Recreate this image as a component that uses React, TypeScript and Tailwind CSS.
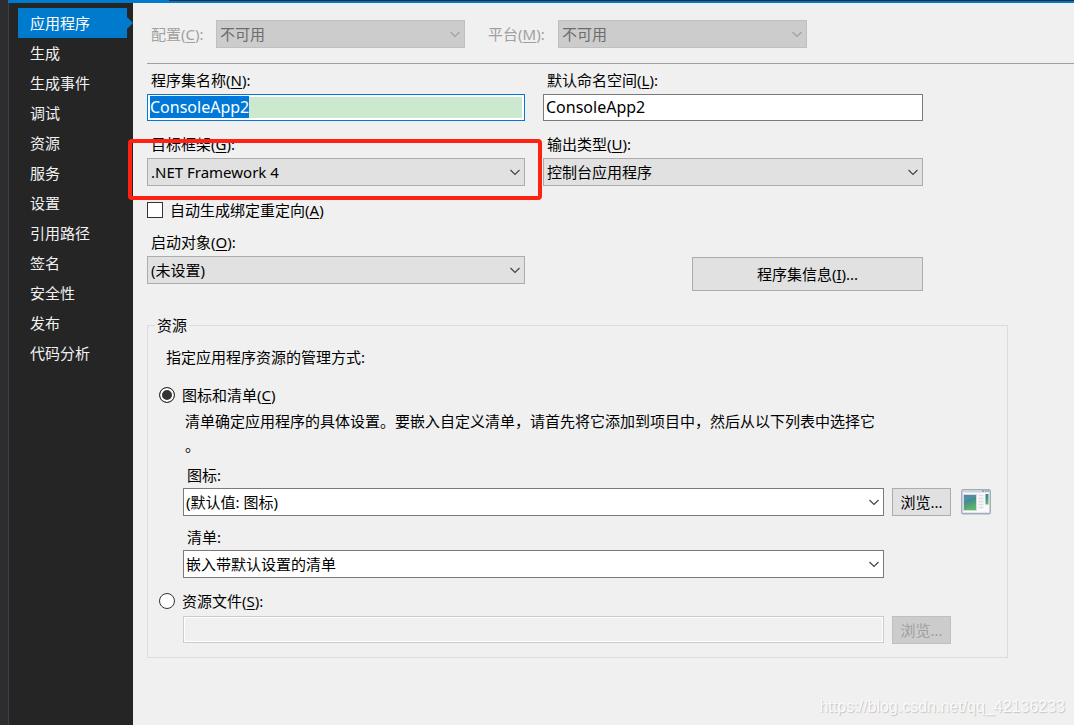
import { useEffect, useRef } from 'react';
import type { ReactNode } from 'react';

interface SelectBoxProps {
    id: string;
    value: string;
    variant?: 'list' | 'edit';
    disabled?: boolean;
}

interface FieldProps {
    id: string;
    label: ReactNode;
    children: ReactNode;
}

const pages = ['应用程序', '生成', '生成事件', '调试', '资源', '服务', '设置', '引用路径', '签名', '安全性', '发布', '代码分析'];

const Key = ({ children }: { children: string }) => (
    <span>(<u className="underline-offset-2">{children}</u>)</span>
);

const SelectBox = ({ id, value, variant = 'list', disabled }: SelectBoxProps) => {
    const look = disabled
        ? 'border-[#bfbfbf] bg-[#cccccc] text-[#6d6d6d] pl-[3px]'
        : variant === 'edit'
          ? 'border-[#7a7a7a] bg-white pl-[2px]'
          : 'border-[#acacac] bg-[#e1e1e1] pl-[3px]';

    return (
        <div className="relative w-full min-w-0">
            <select
                id={id}
                disabled={disabled}
                className={`block h-7 w-full appearance-none border pr-6 opacity-100 outline-none ${look}`}
            >
                <option>{value}</option>
            </select>
            <svg
                className={`pointer-events-none absolute right-[5px] top-[11px] ${disabled ? 'text-[#a0a0a0]' : 'text-[#404040]'}`}
                width="10"
                height="7"
                viewBox="0 0 10 7"
                fill="none"
                stroke="currentColor"
                strokeWidth="1.1"
            >
                <path d="M0.5 1 L5 5.500 L9.500 1" />
            </svg>
        </div>
    );
};

const Field = ({ id, label, children }: FieldProps) => (
    <div className="flex min-w-0 flex-col gap-1">
        <label htmlFor={id} className="pl-1">{label}</label>
        {children}
    </div>
);

const Sidebar = () => (
    <nav className="w-[125px] shrink-0 border-l border-[#3f3f46] bg-[#252526] pl-[9px] pt-[5px] text-[#f1f1f1]">
        {pages.map((page, i) => (
            <a
                key={page}
                href="#"
                className={`relative mr-[6px] block h-[30px] pl-3 leading-[30px] ${i === 0 ? 'bg-[#007acc] text-white' : ''}`}
            >
                {page}
                {i === 0 && (
                    <svg className="absolute left-full top-[9px]" width="6" height="12" viewBox="0 0 6 12">
                        <path d="M0 0 L6 6 L0 12 Z" fill="#007acc" />
                    </svg>
                )}
            </a>
        ))}
    </nav>
);

const WindowIcon = () => (
    <svg className="self-center justify-self-end" width="30" height="26" viewBox="0 0 30 26">
        <defs>
            <linearGradient id="pane" x1="0" y1="0" x2="0.3" y2="1">
                <stop offset="0" stopColor="#4377a8" />
                <stop offset="0.5" stopColor="#45908c" />
                <stop offset="1" stopColor="#5fb56a" />
            </linearGradient>
        </defs>
        <rect x="0.75" y="0.75" width="28.5" height="24" rx="1.5" fill="#f8f9fa" stroke="#a3adb8" strokeWidth="1.5" />
        <rect x="1.5" y="1.5" width="27" height="2" fill="#cbd3dc" />
        <path d="M21 2 h2 M24 2 h1.5 M26.5 2 h1.5" stroke="#6e7c8c" />
        <rect x="2.5" y="5.5" width="13" height="16" fill="#fff" stroke="#d5d9dd" />
        <rect x="3" y="6" width="12" height="15" fill="url(#pane)" />
        <path d="M3 14 Q7 9 15 8 V6 H3 Z" fill="#6ba3c4" opacity="0.35" />
        <path d="M17.5 6.5 h5 M17.5 9.5 h5 M17.5 12.5 h5 M17.5 15.5 h5 M17.5 18.5 h5" stroke="#dcdfe2" strokeWidth="1.5" />
        <rect x="24.500" y="5" width="3" height="10.500" fill="url(#pane)" />
        <path d="M2 23.5 H28" stroke="#e4e7ea" />
    </svg>
);

const radioClass =
    'size-4 shrink-0 appearance-none rounded-full border border-[#333] bg-white checked:bg-[#333] checked:shadow-[inset_0_0_0_2px_#fff]';

const App = () => {
    const nameRef = useRef<HTMLInputElement>(null);

    useEffect(() => {
        nameRef.current?.focus();
        nameRef.current?.select();
    }, []);

    return (
        <div className="relative flex min-h-screen bg-[#2d2d30] pl-2 font-['Noto_Sans','Noto_Sans_CJK_SC',sans-serif] text-[15px] leading-5 text-black">
            <div className="flex min-w-0 flex-1 flex-col">
                {/* Document well edge */}
                <div className="flex h-[3px] shrink-0">
                    <div className="w-[161px] bg-[#007acc]" />
                    <div className="flex-1 border-b-2 border-[#007acc]" />
                </div>

                <div className="flex flex-1">
                    <Sidebar />

                    <main className="min-w-0 flex-1 bg-[#f0f0f0] pl-[14px]">
                        <div className="flex items-center border-b border-[#a0a0a0] pb-[15px] pt-[17px]">
                            <label htmlFor="config" className="w-[69px] shrink-0 pl-1 text-[#a0a0a0]">配置<Key>C</Key>:</label>
                            <div className="w-[249px]"><SelectBox id="config" value="不可用" disabled /></div>
                            <label htmlFor="platform" className="w-[93px] shrink-0 pl-[23px] text-[#a0a0a0]">平台<Key>M</Key>:</label>
                            <div className="w-[249px]"><SelectBox id="platform" value="不可用" disabled /></div>
                        </div>

                        <div className="mt-[6px] grid max-w-[776px] grid-cols-[378fr_380fr] gap-x-[18px] gap-y-[13px]">
                            <Field id="assembly" label={<>程序集名称<Key>N</Key>:</>}>
                                <input
                                    id="assembly"
                                    ref={nameRef}
                                    defaultValue="ConsoleApp2"
                                    className="h-[27px] w-full border border-[#0078d7] bg-[#cce8cf] px-[2px] pb-px text-base leading-5 shadow-[inset_0_0_0_2px_#fff] outline-none selection:bg-[#0078d7] selection:text-white"
                                />
                            </Field>
                            <Field id="namespace" label={<>默认命名空间<Key>L</Key>:</>}>
                                <input
                                    id="namespace"
                                    defaultValue="ConsoleApp2"
                                    className="h-[27px] w-full border border-[#7a7a7a] bg-white px-[2px] pb-px text-base leading-5 outline-none"
                                />
                            </Field>
                            <div className="relative">
                                <Field id="framework" label={<>目标框架<Key>G</Key>:</>}>
                                    <SelectBox id="framework" value=".NET Framework 4" />
                                </Field>
                                <div className="pointer-events-none absolute -bottom-[14px] -left-[19px] -right-[17px] top-[5px] z-10 rounded-[4px] border-4 border-[#ff2113]" />
                            </div>
                            <Field id="output" label={<>输出类型<Key>U</Key>:</>}>
                                <SelectBox id="output" value="控制台应用程序" />
                            </Field>
                        </div>

                        <label className="mt-[14px] flex w-fit items-center gap-[7px]">
                            <input type="checkbox" className="size-4 shrink-0 appearance-none border border-[#333] bg-white" />
                            <span>自动生成绑定重定向<Key>A</Key></span>
                        </label>

                        <div className="mt-3 grid max-w-[776px] grid-cols-[378fr_380fr] items-end gap-x-[18px]">
                            <Field id="startup" label={<>启动对象<Key>O</Key>:</>}>
                                <SelectBox id="startup" value="(未设置)" />
                            </Field>
                            <button type="button" className="-mb-[7px] h-[34px] w-[231px] justify-self-end border border-[#acacac] bg-[#e1e1e1]">
                                程序集信息<Key>I</Key>...
                            </button>
                        </div>

                        <fieldset className="mr-4 mt-[31px] max-w-[861px] border border-[#dcdcdc] pb-[13px] pl-[11px] pr-4">
                            <legend className="-ml-1 px-[2px]">资源</legend>
                            <p className="mt-3 pl-[7px]">指定应用程序资源的管理方式:</p>

                            <label className="mt-[18px] flex w-fit items-center gap-[7px]">
                                <input type="radio" name="resources" defaultChecked className={radioClass} />
                                <span>图标和清单<Key>C</Key></span>
                            </label>
                            <p className="mt-1 pl-[26px] leading-6">
                                清单确定应用程序的具体设置。要嵌入自定义清单，请首先将它添加到项目中，然后从以下列表中选择它
                                <br />。
                            </p>

                            <div className="ml-6 grid grid-cols-[minmax(0,1fr)_59px_32px] gap-x-2">
                                <label htmlFor="icon" className="col-span-3 mb-[3px] mt-2 pl-1">图标:</label>
                                <SelectBox id="icon" value="(默认值: 图标)" variant="edit" />
                                <button type="button" className="h-7 border border-[#acacac] bg-[#e1e1e1]">浏览...</button>
                                <WindowIcon />

                                <label htmlFor="manifest" className="col-span-3 mb-[3px] mt-[11px] pl-1">清单:</label>
                                <SelectBox id="manifest" value="嵌入带默认设置的清单" variant="edit" />
                            </div>

                            <label className="mt-[13px] flex w-fit items-center gap-[7px]">
                                <input type="radio" name="resources" className={radioClass} />
                                <span id="resource-file">资源文件<Key>S</Key>:</span>
                            </label>
                            <div className="ml-6 mt-[5px] grid grid-cols-[minmax(0,1fr)_59px_32px] gap-x-2">
                                <input
                                    disabled
                                    aria-labelledby="resource-file"
                                    className="h-[27px] w-full border border-[#cccccc] bg-[#f0f0f0] px-[2px] shadow-[inset_0_0_0_1px_#fff]"
                                />
                                <button type="button" disabled className="h-7 border border-[#bfbfbf] bg-[#cccccc] text-[#a0a0a0]">浏览...</button>
                            </div>
                        </fieldset>
                    </main>
                </div>
            </div>

            <div className="pointer-events-none absolute bottom-[6px] right-[9px] font-['Liberation_Sans',sans-serif] text-base text-[#fafafa] [text-shadow:1px_1px_1px_#c4c4c4]">
                https://blog.csdn.net/qq_42136233
            </div>
        </div>
    );
};

export default App;
